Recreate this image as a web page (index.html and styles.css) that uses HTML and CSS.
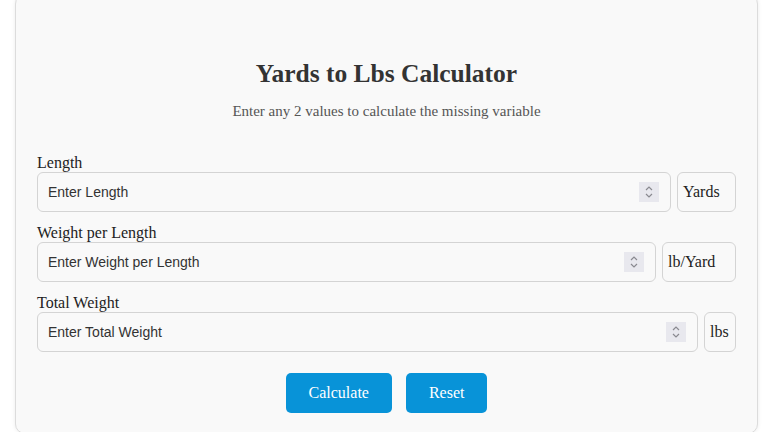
FILE: index.html
```html
<!DOCTYPE html>
<html lang="en">
<head>
<meta charset="utf-8">
<title>Yards to Lbs Calculator</title>
<link rel="stylesheet" href="styles.css">
</head>
<body>
<div class="calc">
  <h1 class="title">Yards to Lbs Calculator</h1>
  <p class="subtitle">Enter any 2 values to calculate the missing variable</p>

  <div class="row">
    <label class="label" for="len">Length</label>
    <div class="line">
      <div class="field">
        <input id="len" class="input" type="text" placeholder="Enter Length">
        <span class="spin"><svg width="8" height="14" viewBox="0 0 8 14"><path d="M1 5 L4 2 L7 5 M1 9 L4 12 L7 9" fill="none" stroke="#8a8a90" stroke-width="1.2"/></svg></span>
      </div>
      <div class="unit unit-yards">Yards</div>
    </div>
  </div>

  <div class="row">
    <label class="label" for="wpl">Weight per Length</label>
    <div class="line">
      <div class="field">
        <input id="wpl" class="input" type="text" placeholder="Enter Weight per Length">
        <span class="spin"><svg width="8" height="14" viewBox="0 0 8 14"><path d="M1 5 L4 2 L7 5 M1 9 L4 12 L7 9" fill="none" stroke="#8a8a90" stroke-width="1.2"/></svg></span>
      </div>
      <div class="unit unit-lbyard">lb/Yard</div>
    </div>
  </div>

  <div class="row">
    <label class="label" for="tw">Total Weight</label>
    <div class="line">
      <div class="field">
        <input id="tw" class="input" type="text" placeholder="Enter Total Weight">
        <span class="spin"><svg width="8" height="14" viewBox="0 0 8 14"><path d="M1 5 L4 2 L7 5 M1 9 L4 12 L7 9" fill="none" stroke="#8a8a90" stroke-width="1.2"/></svg></span>
      </div>
      <div class="unit unit-lbs">lbs</div>
    </div>
  </div>

  <div class="actions">
    <button class="btn" type="button">Calculate</button>
    <button class="btn" type="button">Reset</button>
  </div>
</div>
</body>
</html>
```

FILE: styles.css
```css
html, body {
  margin: 0;
  padding: 0;
  background: #ffffff;
  overflow: hidden;
}
body {
  font-family: "Liberation Serif", "Times New Roman", serif;
  color: #222;
}
.calc {
  box-sizing: border-box;
  width: 743px;
  height: 440px;
  margin: -6px 0 0 15px;
  padding: 59px 21px 0 21px;
  background: #f9f9f9;
  border: 1px solid #dcdcdc;
  border-radius: 10px;
  box-shadow: 0 0 4px rgba(0, 0, 0, 0.08);
}
.title {
  margin: 0;
  font-size: 25.5px;
  font-weight: bold;
  text-align: center;
  color: #333;
  line-height: 40px;
}
.subtitle {
  margin: 8px 0 34px 0;
  font-size: 15px;
  text-align: center;
  color: #555;
  line-height: 18px;
}
.row {
  margin-bottom: 12px;
}
.label {
  display: block;
  font-size: 16px;
  line-height: 18px;
  color: #222;
}
.line {
  display: flex;
  gap: 6px;
}
.field {
  flex: 1;
  display: flex;
  align-items: center;
  box-sizing: border-box;
  height: 40px;
  padding: 0 11px 0 10px;
  background: #f9f9f9;
  border: 1px solid #d4d4d4;
  border-radius: 6px;
}
.input {
  flex: 1;
  min-width: 0;
  border: none;
  outline: none;
  background: transparent;
  padding: 0;
  font-family: "Liberation Sans", Arial, sans-serif;
  font-size: 14px;
  color: #333;
}
.input::placeholder {
  color: #333;
  opacity: 1;
}
.spin {
  display: flex;
  align-items: center;
  justify-content: center;
  width: 20px;
  height: 20px;
  background: #e8e8ee;
}
.unit {
  box-sizing: border-box;
  height: 40px;
  display: flex;
  align-items: center;
  padding-left: 5px;
  font-size: 16px;
  color: #222;
  background: #f9f9f9;
  border: 1px solid #d4d4d4;
  border-radius: 6px;
}
.unit-yards { width: 59px; }
.unit-lbyard { width: 74px; }
.unit-lbs { width: 32px; }
.actions {
  display: flex;
  justify-content: center;
  gap: 14px;
  margin-top: 21px;
}
.btn {
  height: 40px;
  padding: 0 23px;
  font-family: "Liberation Serif", "Times New Roman", serif;
  font-size: 16px;
  color: #ffffff;
  background: #0893d8;
  border: none;
  border-radius: 5px;
}
```
